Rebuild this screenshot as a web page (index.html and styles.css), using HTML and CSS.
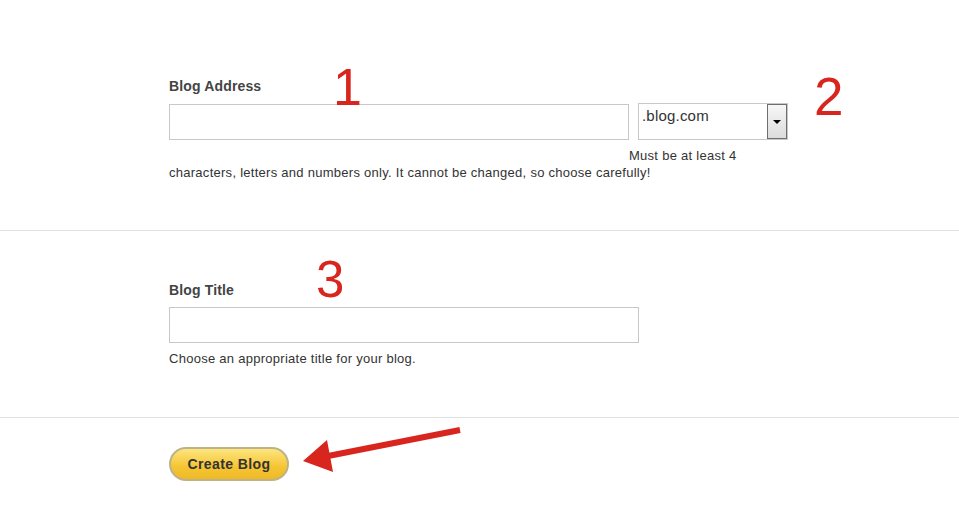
FILE: index.html
```html
<!DOCTYPE html>
<html lang="en">
<head>
    <meta charset="UTF-8">
    <meta name="viewport" content="width=device-width, initial-scale=1.0">
    <title>Create Blog</title>
    <link rel="stylesheet" href="styles.css">
</head>
<body>
    <div class="page">
        <div class="section section-address">
            <div class="form-block">
                <div class="field-label">Blog Address</div>
                <div class="address-row">
                    <input class="text-input address-input" type="text">
                    <div class="domain-select">
                        <span class="domain-value">.blog.com</span>
                        <span class="select-btn"><span class="select-arrow"></span></span>
                    </div>
                </div>
                <div class="hint hint-address">Must be at least 4 characters, letters and numbers only. It cannot be changed, so choose carefully!</div>
            </div>
        </div>

        <div class="section section-title">
            <div class="form-block">
                <div class="field-label label-title">Blog Title</div>
                <input class="text-input title-input" type="text">
                <div class="hint">Choose an appropriate title for your blog.</div>
            </div>
        </div>

        <div class="section section-submit">
            <div class="form-block">
                <button class="create-btn" type="button">Create Blog</button>
            </div>
        </div>

        <!-- red annotation marks drawn over the form -->
        <div class="mark mark-1">1</div>
        <div class="mark mark-2">2</div>
        <div class="mark mark-3">3</div>
        <svg class="mark-arrow" width="175" height="60" viewBox="0 0 175 60">
            <line x1="165" y1="10" x2="28" y2="37" stroke="#d8261e" stroke-width="6"/>
            <polygon points="8,41 32,20 38,52" fill="#d8261e"/>
        </svg>
    </div>
</body>
</html>
```

FILE: styles.css
```css
body {
    margin: 0;
    background-color: #fff;
    font-family: 'Liberation Sans', Arial, sans-serif;
    color: #333;
}
.page {
    position: relative;
    width: 959px;
    height: 509px;
    overflow: hidden;
}
.section {
    border-bottom: 1px solid #e0e0e0;
}
.section-address {
    padding: 78px 0 49px;
}
.section-title {
    padding: 51px 0 50px;
}
.section-submit {
    border-bottom: none;
    padding-top: 29px;
}
.form-block {
    margin-left: 169px;
    width: 620px;
}
.field-label {
    font-size: 14px;
    line-height: 16px;
    font-weight: bold;
    letter-spacing: 0.15px;
    color: #444;
    margin-bottom: 10px;
}
.label-title {
    margin-bottom: 9px;
}
.address-row {
    display: flex;
    gap: 9px;
    align-items: flex-start;
}
.text-input {
    display: block;
    box-sizing: border-box;
    height: 36px;
    margin: 0;
    padding: 0 6px;
    border: 1px solid #c8c8c8;
    background: #fff;
    font-family: inherit;
    font-size: 14px;
}
.address-input {
    width: 460px;
}
.title-input {
    width: 470px;
}
.domain-select {
    box-sizing: border-box;
    width: 150px;
    height: 37px;
    margin-top: -1px;
    border: 1px solid #c8c8c8;
    display: flex;
    justify-content: space-between;
    background: #fff;
}
.domain-value {
    font-size: 15px;
    line-height: 17px;
    letter-spacing: 0.2px;
    padding: 3px 0 0 3px;
    color: #333;
}
.select-btn {
    box-sizing: border-box;
    width: 20px;
    border: 1px solid #6e6e6e;
    background: linear-gradient(#f6f6f6, #dcdcdc);
    display: flex;
    align-items: center;
    justify-content: center;
}
.select-arrow {
    width: 0;
    height: 0;
    border-left: 4px solid transparent;
    border-right: 4px solid transparent;
    border-top: 4px solid #000;
}
.hint {
    font-size: 13px;
    line-height: 17px;
    letter-spacing: 0.27px;
    color: #333;
    margin-top: 7px;
}
.hint-address {
    text-indent: 460px;
    margin-top: 7px;
}
.create-btn {
    box-sizing: border-box;
    width: 120px;
    height: 34px;
    padding: 0;
    border: 2px solid #bdb38a;
    border-radius: 17px;
    background: linear-gradient(#fde57f, #f5c533 60%, #efb925);
    font-family: inherit;
    font-size: 14px;
    font-weight: bold;
    letter-spacing: 0.4px;
    color: #333;
    cursor: pointer;
}
.mark {
    position: absolute;
    font-family: 'Liberation Sans', Arial, sans-serif;
    font-size: 52px;
    line-height: 52px;
    color: #d8261e;
}
.mark-1 {
    left: 333px;
    top: 61px;
}
.mark-2 {
    left: 814px;
    top: 71px;
    font-size: 53px;
}
.mark-3 {
    left: 316px;
    top: 255px;
    font-size: 51px;
    line-height: 50px;
}
.mark-arrow {
    position: absolute;
    left: 295px;
    top: 420px;
}
```
